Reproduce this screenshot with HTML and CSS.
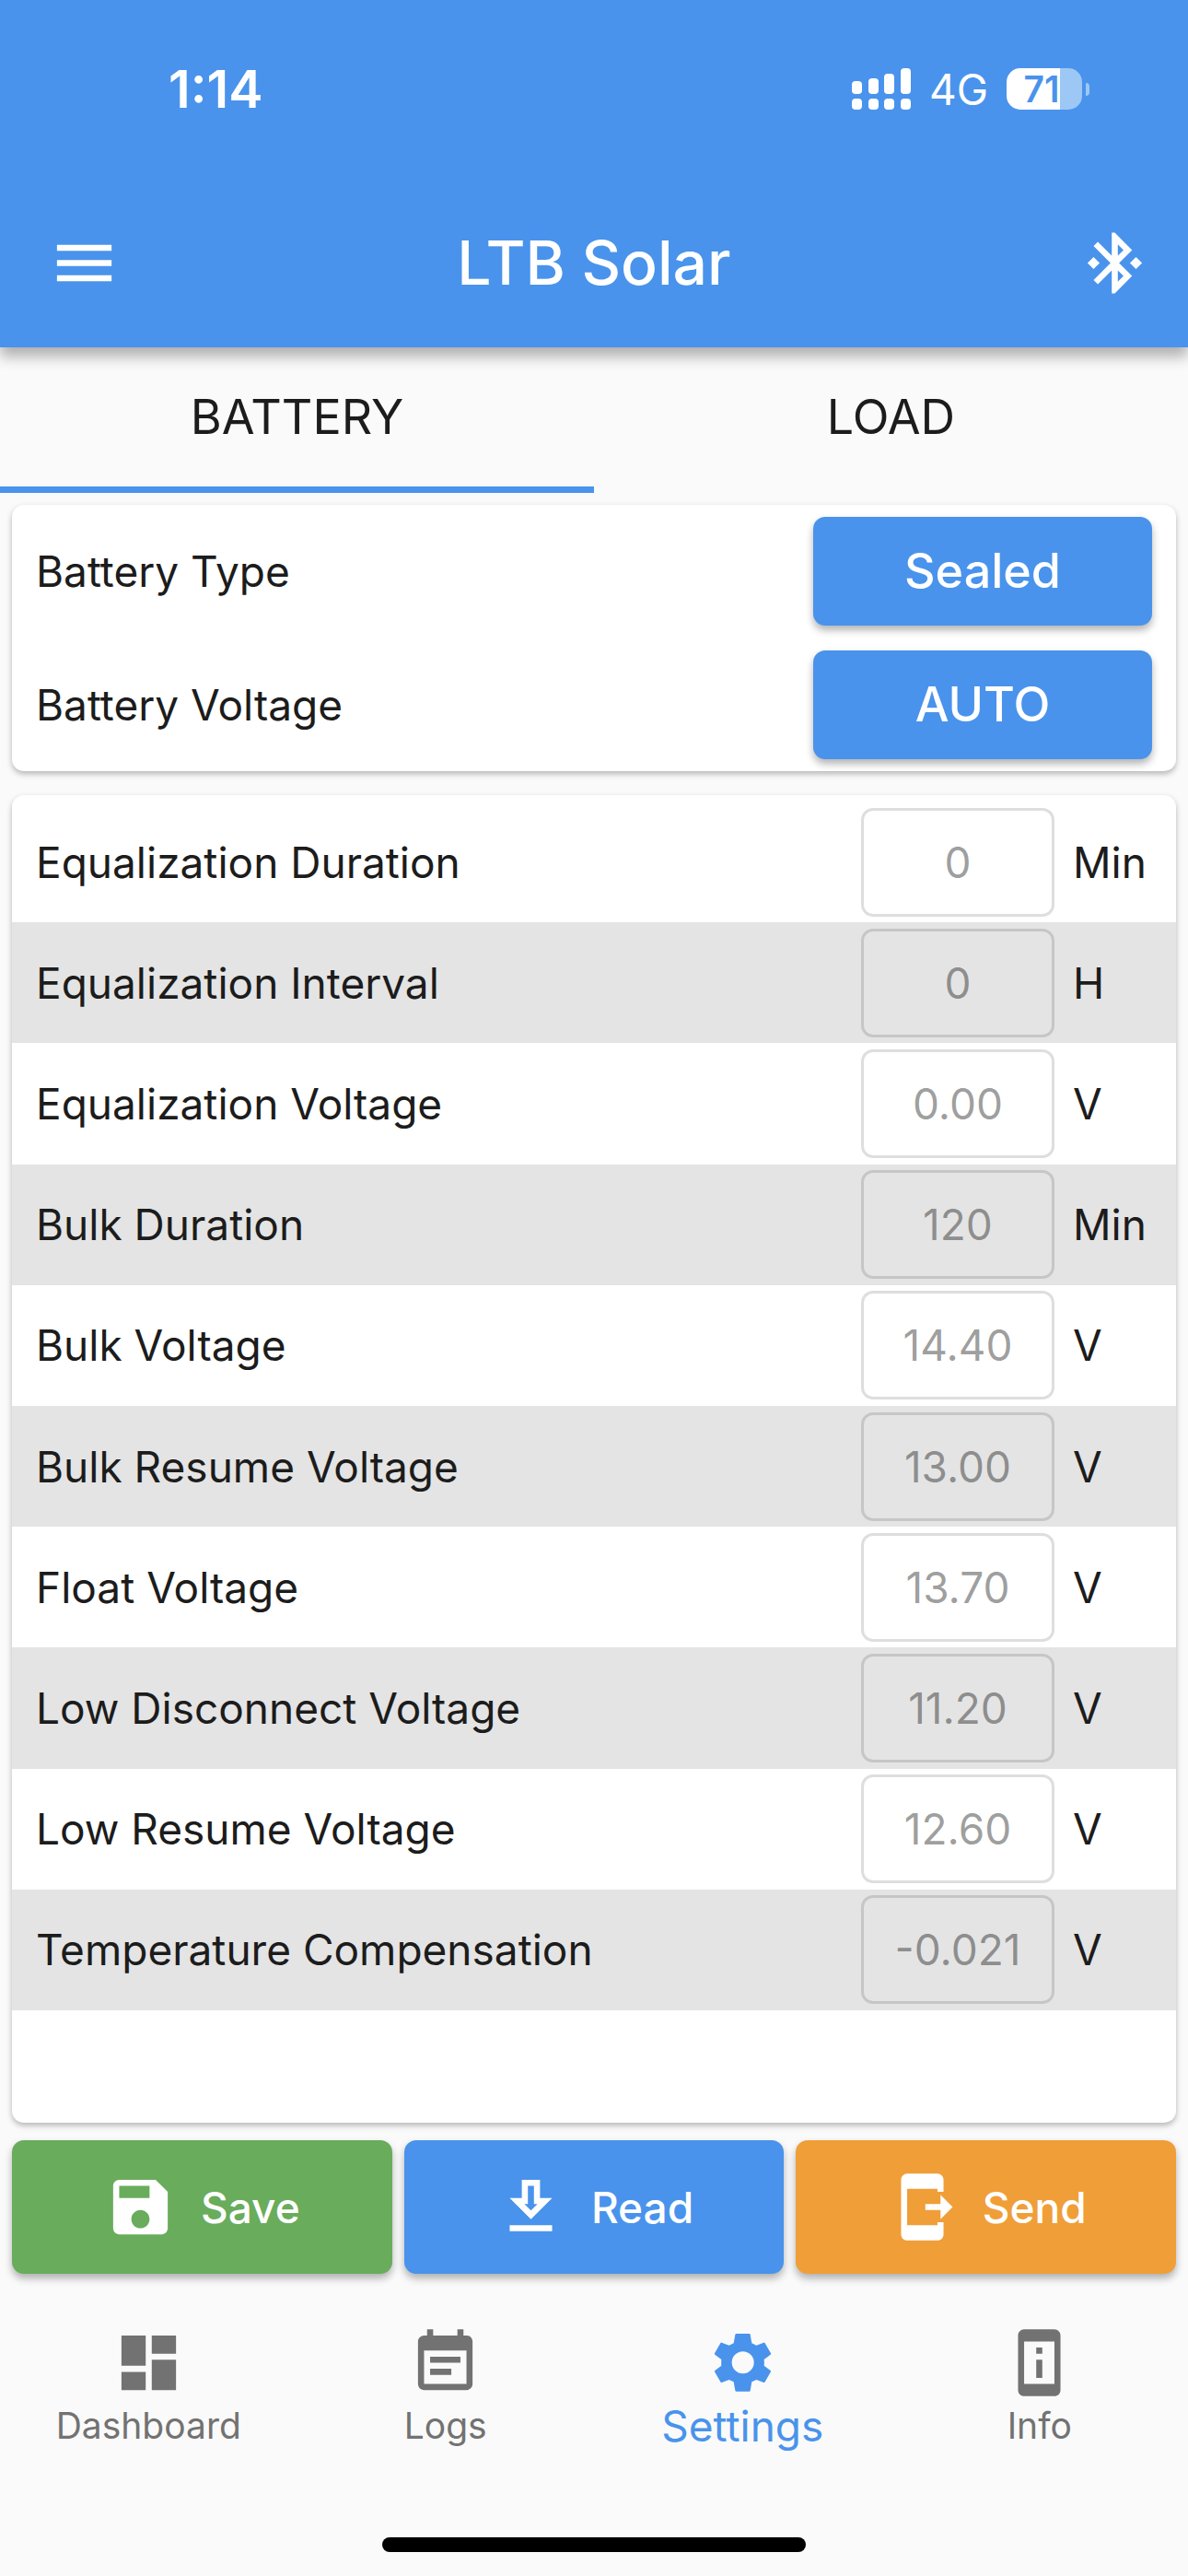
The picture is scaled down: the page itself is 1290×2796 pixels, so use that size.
FILE: index.html
```html
<!DOCTYPE html>
<html lang="en">
<head>
<meta charset="utf-8">
<meta name="viewport" content="width=device-width">
<title>LTB Solar</title>
<link rel="stylesheet" href="styles.css">
</head>
<body>
<header class="header">
  <div class="status">
    <span class="clock">1:14</span>
    <div class="status-icons">
      <svg class="signal" viewBox="0 0 64 45" aria-hidden="true"><g fill="#fff"><rect x="0" y="14" width="11" height="14" rx="4"/><rect x="18" y="11" width="11" height="17" rx="4"/><rect x="35" y="6" width="11" height="22" rx="4"/><rect x="53" y="0" width="11" height="28" rx="4"/><rect x="0" y="33" width="11" height="12" rx="4"/><rect x="18" y="33" width="11" height="12" rx="4"/><rect x="35" y="33" width="11" height="12" rx="4"/><rect x="53" y="33" width="11" height="12" rx="4"/></g></svg>
      <span class="network">4G</span>
      <span class="battery"><span class="battery-level">71</span></span>
    </div>
  </div>
  <div class="toolbar">
    <button class="icon-button" type="button" aria-label="Menu"><svg class="icon" viewBox="0 0 24 24"><path d="M3 18h18v-2H3v2zm0-5h18v-2H3v2zm0-7v2h18V6H3z"/></svg></button>
    <h1 class="title">LTB Solar</h1>
    <button class="icon-button" type="button" aria-label="Bluetooth"><svg class="icon" viewBox="0 0 24 24"><path d="M7 12l-2-2-2 2 2 2 2-2zm10.710-4.290L12 2h-1v7.590L6.410 5 5 6.410 10.590 12 5 17.590 6.410 19 11 14.410V22h1l5.710-5.710-4.300-4.290 4.300-4.290zM13 5.830l1.880 1.880L13 9.590V5.830zm1.880 10.460L13 18.170v-3.760l1.880 1.880zM19 10l-2 2 2 2 2-2-2-2z"/></svg></button>
  </div>
</header>
<nav class="tabs">
  <button class="tab tab-active" type="button">BATTERY</button>
  <button class="tab" type="button">LOAD</button>
</nav>
<main class="content">
  <section class="card choices">
    <div class="choice"><span id="type-label">Battery Type</span><button class="choice-button" type="button" aria-describedby="type-label">Sealed</button></div>
    <div class="choice"><span id="voltage-label">Battery Voltage</span><button class="choice-button" type="button" aria-describedby="voltage-label">AUTO</button></div>
  </section>
  <section class="card params">
    <div class="param"><label for="p1">Equalization Duration</label><input id="p1" class="field" value="0"><span class="unit">Min</span></div>
    <div class="param"><label for="p2">Equalization Interval</label><input id="p2" class="field" value="0"><span class="unit">H</span></div>
    <div class="param"><label for="p3">Equalization Voltage</label><input id="p3" class="field" value="0.00"><span class="unit">V</span></div>
    <div class="param"><label for="p4">Bulk Duration</label><input id="p4" class="field" value="120"><span class="unit">Min</span></div>
    <div class="param"><label for="p5">Bulk Voltage</label><input id="p5" class="field" value="14.40"><span class="unit">V</span></div>
    <div class="param"><label for="p6">Bulk Resume Voltage</label><input id="p6" class="field" value="13.00"><span class="unit">V</span></div>
    <div class="param"><label for="p7">Float Voltage</label><input id="p7" class="field" value="13.70"><span class="unit">V</span></div>
    <div class="param"><label for="p8">Low Disconnect Voltage</label><input id="p8" class="field" value="11.20"><span class="unit">V</span></div>
    <div class="param"><label for="p9">Low Resume Voltage</label><input id="p9" class="field" value="12.60"><span class="unit">V</span></div>
    <div class="param"><label for="p10">Temperature Compensation</label><input id="p10" class="field" value="-0.021"><span class="unit">V</span></div>
  </section>
  <div class="actions">
    <button class="action save" type="button"><svg class="icon" viewBox="0 0 24 24"><path d="M17 3H5c-1.110 0-2 .9-2 2v14c0 1.100.89 2 2 2h14c1.100 0 2-.9 2-2V7l-4-4zm-5 16c-1.660 0-3-1.340-3-3s1.340-3 3-3 3 1.340 3 3-1.340 3-3 3zm3-10H5V5h10v4z"/></svg>Save</button>
    <button class="action read" type="button"><svg class="icon" viewBox="0 0 24 24"><path d="M19 9h-4V3H9v6H5l7 7 7-7zm-8 2V5h2v6h1.170L12 13.170 9.830 11H11zm-6 7h14v2H5z"/></svg>Read</button>
    <button class="action send" type="button"><svg class="icon" viewBox="0 0 24 24"><path d="M17 18H7V6h10v1h2V3c0-1.100-.9-2-2-2H7c-1.100 0-2 .9-2 2v18c0 1.100.9 2 2 2h10c1.100 0 2-.9 2-2v-4h-2v1zM22 12l-4-4v3h-5v2h5v3z"/></svg>Send</button>
  </div>
</main>
<nav class="bottom">
  <a class="destination" href="#dashboard"><svg class="icon" viewBox="0 0 24 24"><path d="M3 13h8V3H3v10zm0 8h8v-6H3v6zm10 0h8V11h-8v10zm0-18v6h8V3h-8z"/></svg>Dashboard</a>
  <a class="destination" href="#logs"><svg class="icon" viewBox="0 0 24 24"><path d="M17 10H7v2h10v-2zm2-7h-1V1h-2v2H8V1H6v2H5c-1.110 0-2 .9-2 2v14c0 1.100.89 2 2 2h14c1.100 0 2-.9 2-2V5c0-1.100-.9-2-2-2zm0 16H5V8h14v11zm-5-5H7v2h7v-2z"/></svg>Logs</a>
  <a class="destination current" href="#settings" aria-current="page"><svg class="icon" viewBox="63 62 237 237"><path fill-rule="evenodd" d="M161 86H203Q206 86 206 89L211 117 226 124 250 115Q253 114 254 117L273 150Q274 152 272 154L251 170Q252 180 251 190L272 206Q274 208 273 210L254 243Q253 246 250 245L226 236 211 243 206 271Q206 274 203 274H161Q158 274 157 271L152 243 137 236 113 245Q110 246 109 243L90 210Q89 208 91 206L112 190Q111 180 112 170L91 154Q89 152 90 150L109 117Q110 114 113 115L137 124 152 117 157 89Q158 86 161 86ZM182 144A36 36 0 0 0 182 216A36 36 0 0 0 182 144Z"/></svg>Settings</a>
  <a class="destination" href="#info"><svg class="icon" viewBox="0 0 24 24"><path d="M13 7h-2v2h2V7zm0 4h-2v6h2v-6zm4-10H7c-1.100 0-2 .9-2 2v18c0 1.100.9 2 2 2h10c1.100 0 2-.9 2-2V3c0-1.100-.9-2-2-2zm0 18H7V5h10v14z"/></svg>Info</a>
</nav>
<div class="home"></div>
</body>
</html>
```
FILE: styles.css
```css
* { box-sizing: border-box; }

body {
  margin: 0;
  min-height: 100vh;
  display: flex;
  flex-direction: column;
  background: #fafafa;
  color: #1c1c1c;
  font-family: Inter, "Liberation Sans", sans-serif;
  font-size: 46px;
  line-height: 56px;
}

button, input { font: inherit; color: inherit; border: 0; padding: 0; margin: 0; background: none; }

.icon { display: block; flex: none; width: 79px; height: 79px; fill: currentColor; }

.header {
  position: relative;
  background: #4993ec;
  color: #fff;
  box-shadow: 0 10px 14px rgba(0, 0, 0, 0.3);
}

.status {
  display: flex;
  justify-content: space-between;
  align-items: center;
  height: 193px;
  padding: 0 107px 0 183px;
}

.clock { font-size: 56px; font-weight: 600; }
.status-icons { display: flex; align-items: center; }
.signal { width: 64px; height: 45px; margin-right: 20px; }
.network { margin-right: 20px; }

.battery {
  position: relative;
  width: 82px;
  height: 45px;
  border-radius: 15px;
  margin-right: 8px;
  padding-right: 6px;
  background: linear-gradient(to right, #fff 58px, #9dc8f5 58px);
  color: #4993ec;
  font-size: 39px;
  font-weight: 600;
  line-height: 45px;
  text-align: center;
}

.battery::after {
  content: "";
  position: absolute;
  left: 86px;
  top: 16px;
  width: 4px;
  height: 14px;
  border-radius: 0 4px 4px 0;
  background: #9dc8f5;
}

.toolbar {
  display: grid;
  grid-template-columns: 79px 1fr 91px;
  align-items: center;
  height: 184px;
  padding: 0 40px 0 52px;
}

.icon-button { justify-self: end; cursor: pointer; }
.title { margin: 0; font-size: 66px; font-weight: 500; line-height: 80px; text-align: center; }

.tabs { display: flex; height: 158px; }

.tab {
  flex: 1;
  border-bottom: 7px solid transparent;
  font-size: 52px;
}

.tab-active { border-bottom-color: #4993ec; }

.content {
  flex: 1;
  display: flex;
  flex-direction: column;
  padding: 13px 13px 0;
}

.card {
  border-radius: 13px;
  background: #fff;
  box-shadow: 0 3px 6px rgba(0, 0, 0, 0.28);
}

.choices { display: flex; flex-direction: column; gap: 27px; padding: 13px 26px; margin-bottom: 26px; }
.choice { display: flex; justify-content: space-between; align-items: center; }

.choice-button {
  width: 368px;
  height: 118px;
  border-radius: 13px;
  background: #4993ec;
  color: #fff;
  font-size: 52px;
  font-weight: 500;
  box-shadow: 0 5px 8px rgba(0, 0, 0, 0.3);
}

.params {
  flex: 1;
  display: grid;
  grid-auto-rows: 1fr;
  padding: 7px 0 122px;
  margin-bottom: 19px;
}

.param {
  display: grid;
  grid-template-columns: 1fr 210px 88px;
  align-items: center;
  column-gap: 20px;
  padding: 0 24px 0 26px;
}

.param:nth-child(even) { background: #e4e4e4; }

.field {
  width: 100%;
  height: 118px;
  border: 3px solid rgba(0, 0, 0, 0.13);
  border-radius: 13px;
  color: rgba(0, 0, 0, 0.4);
  text-align: center;
}

.actions { display: grid; grid-template-columns: repeat(3, 1fr); gap: 13px; margin-bottom: 30px; }

.action {
  display: flex;
  justify-content: center;
  align-items: center;
  gap: 26px;
  height: 145px;
  border-radius: 13px;
  color: #fff;
  font-weight: 500;
  box-shadow: 0 5px 8px rgba(0, 0, 0, 0.3);
}

.save { background: #69ac5c; }
.read { background: #4993ec; }
.send { background: #f09e38; }

.bottom { display: flex; padding-top: 27px; }

.destination {
  flex: 1;
  display: flex;
  flex-direction: column;
  align-items: center;
  gap: 1px;
  color: #727272;
  font-size: 39px;
  text-decoration: none;
}

.current { color: #4993ec; font-size: 46px; }

.home {
  width: 460px;
  height: 16px;
  margin: 93px auto 26px;
  border-radius: 8px;
  background: #000;
}
```
